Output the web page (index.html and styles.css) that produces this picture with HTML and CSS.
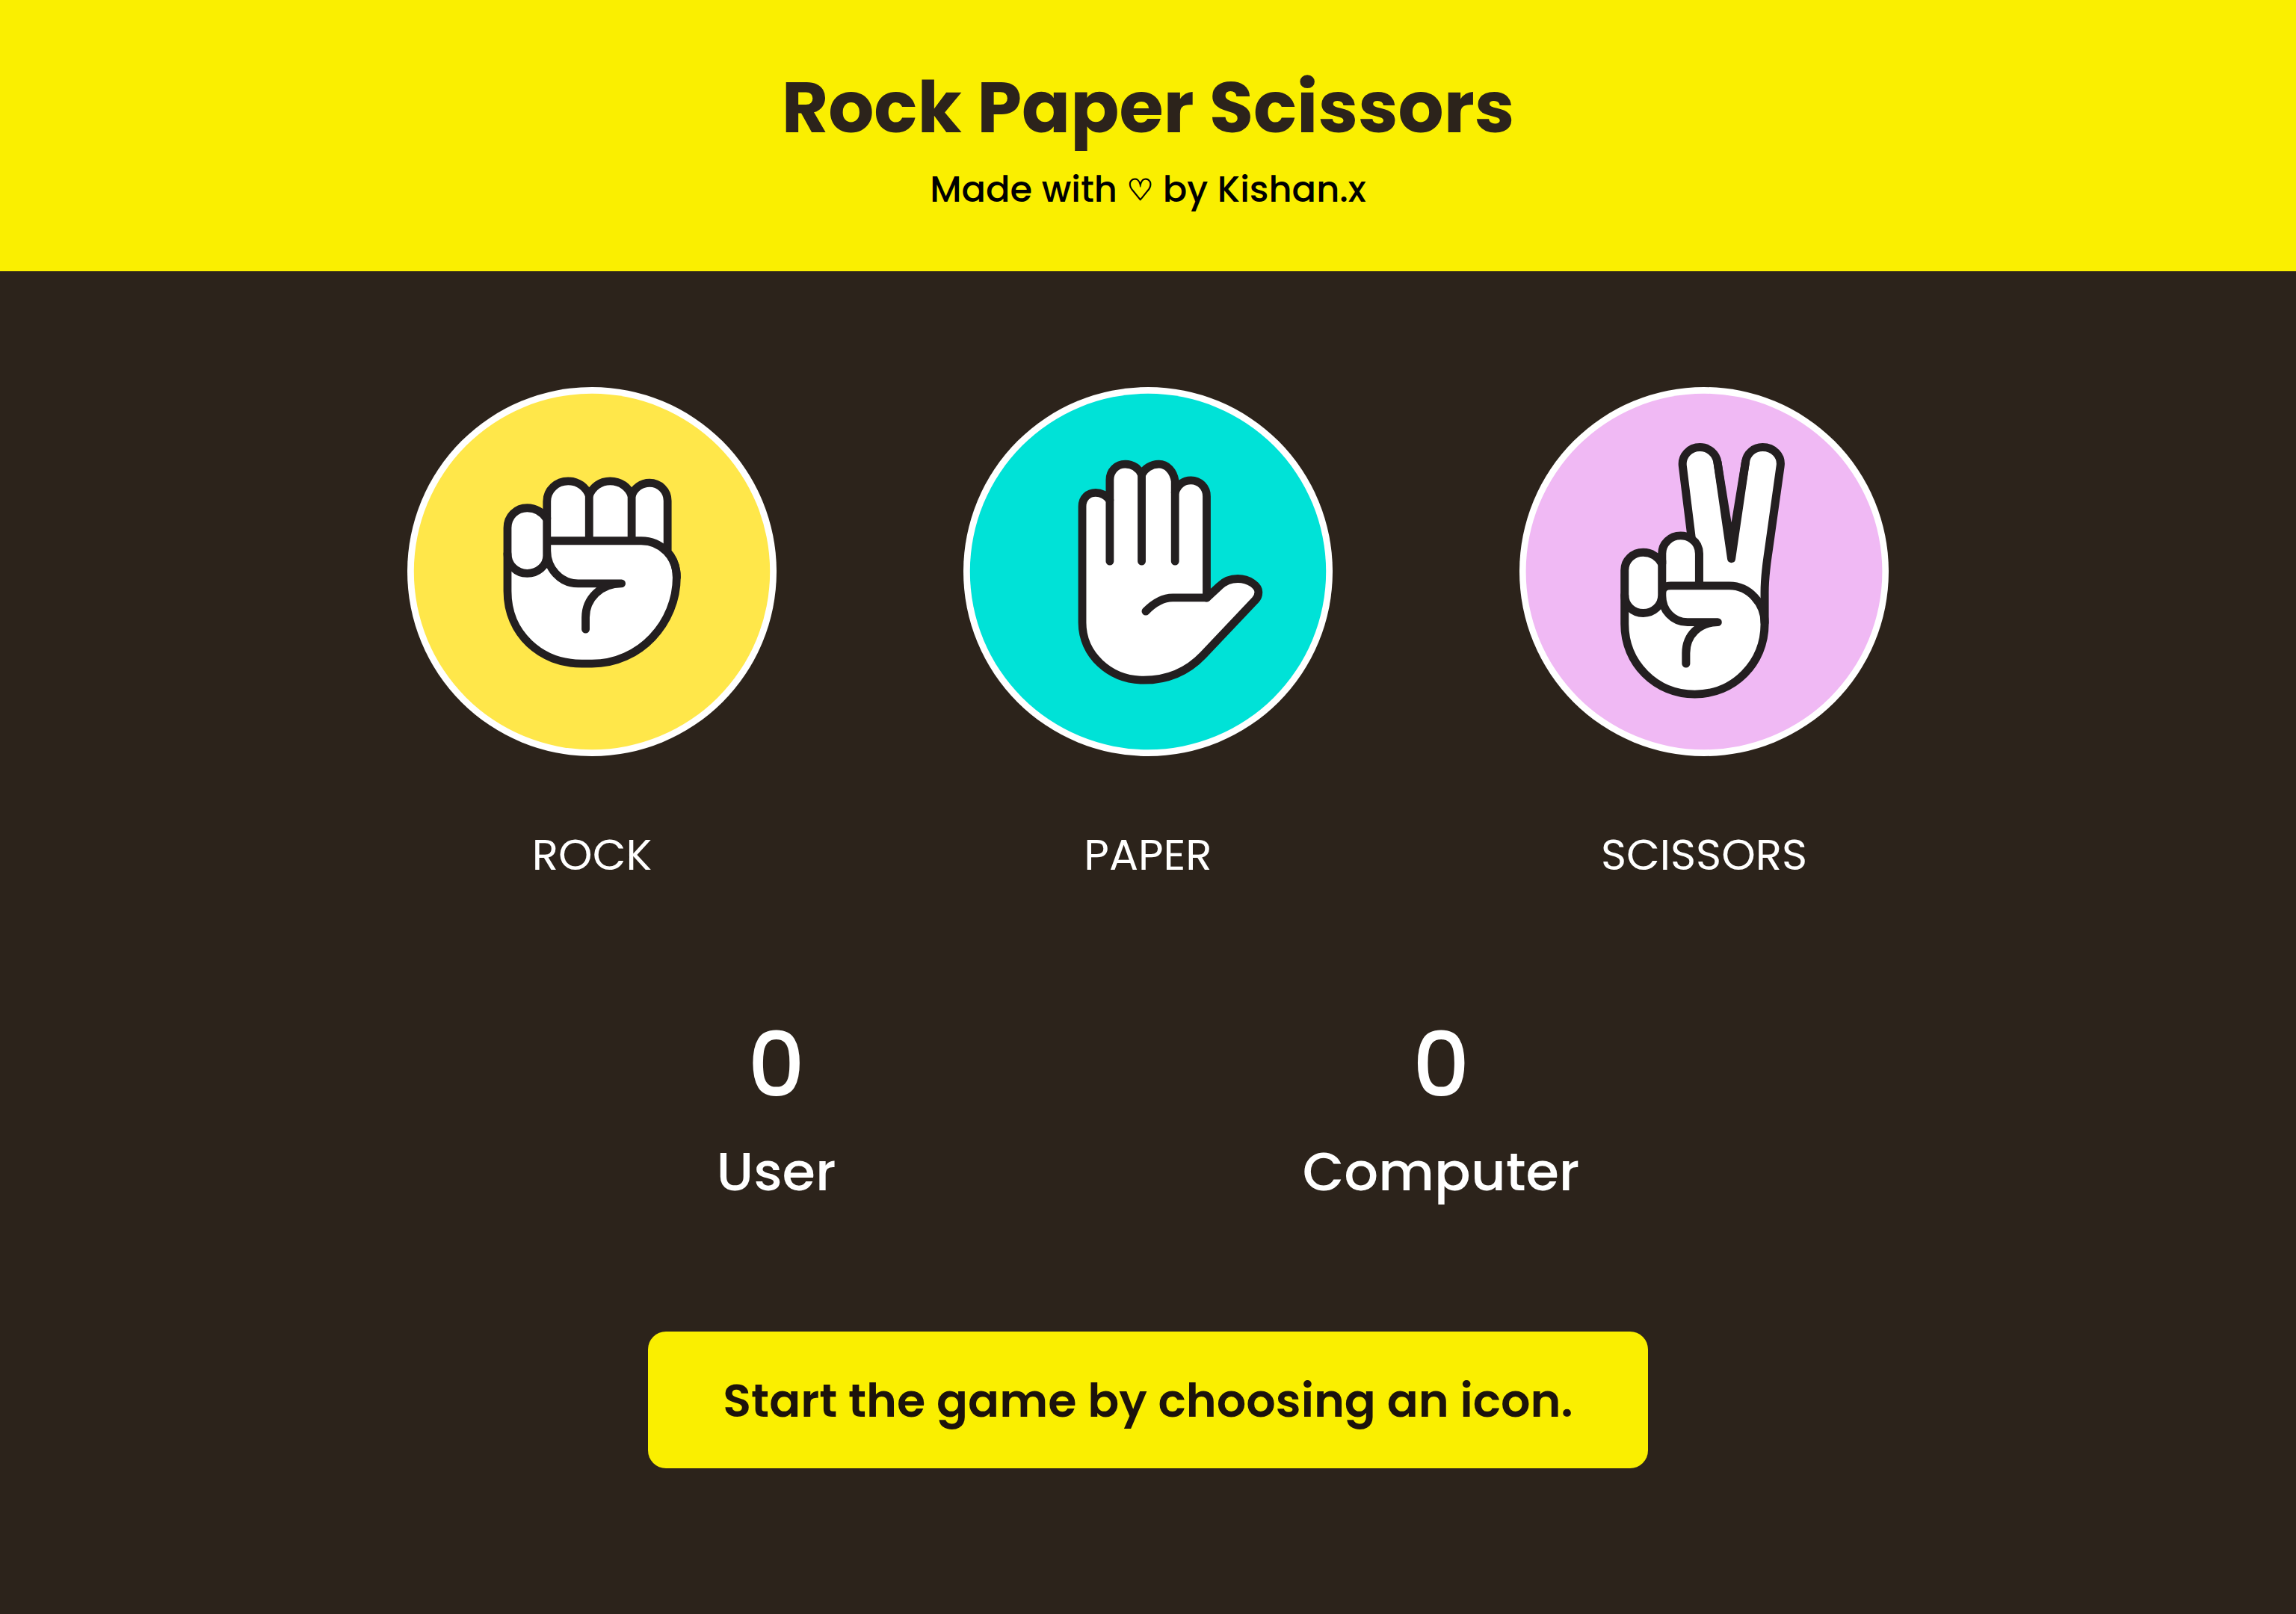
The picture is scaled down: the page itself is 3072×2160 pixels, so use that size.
FILE: index.html
```html
<!DOCTYPE html>
<html lang="en">
<head>
  <meta charset="utf-8">
  <meta name="viewport" content="width=device-width, initial-scale=1">
  <title>Rock Paper Scissors</title>
  <link rel="stylesheet" href="styles.css">
</head>
<body>
  <header class="header">
    <h1 class="title">Rock Paper Scissors</h1>
    <p class="subtitle">Made with <span class="heart">♡</span> by Kishan.x</p>
  </header>

  <main class="game">
    <div class="choices">
      <button class="choice" type="button">
        <svg class="hand" viewBox="45 53 1460 1460" aria-hidden="true">
          <circle class="ring" cx="775" cy="783" r="730"/>
          <circle class="rock-disc" cx="775" cy="783" r="704"/>
          <g class="lines">
            <path class="skin" d="M441 610C441 565 475 531 519 531C552 531 580 548 597 575V505C597 460 635 425 681 425C722 425 752 450 764 482C778 448 808 425 847 425C889 425 921 450 932 483C943 452 970 432 1003 432C1042 432 1074 463 1074 503V705C1097 730 1110 765 1110 805C1110 985 965 1147 775 1147H735C573 1147 441 1030 441 860Z"/>
            <path d="M597 575V700C597 770 650 830 720 830H892M597 661H970C1050 661 1110 725 1110 805M764 482V661M932 483V661M597 570V720C597 760 560 790 519 790C475 790 441 755 441 712M892 830C810 830 750 890 750 965V1011"/>
          </g>
        </svg>
        <span class="choice-label">ROCK</span>
      </button>
      <button class="choice" type="button">
        <svg class="hand" viewBox="57 53 1460 1460" aria-hidden="true">
          <circle class="ring" cx="787" cy="783" r="730"/>
          <circle class="paper-disc" cx="787" cy="783" r="704"/>
          <g class="lines">
            <path class="skin" d="M527 525C527 492 550 471 580 471C600 471 620 480 636 500V420C636 385 662 358 697 358C727 358 751 375 762 400C773 375 800 358 830 358C862 358 888 385 894 425V470C904 440 928 422 957 422C991 422 1019 449 1019 485V887L1070 840C1090 820 1115 811 1142 811C1188 811 1224 840 1224 864C1224 880 1220 887 1210 897L1005 1113C944 1177 862 1212 770 1212C634 1212 527 1110 527 985Z"/>
            <path d="M636 500V742M762 400V742M894 470V742M1019 886H885C845 886 812 905 778 940"/>
          </g>
        </svg>
        <span class="choice-label">PAPER</span>
      </button>
      <button class="choice" type="button">
        <svg class="hand" viewBox="68 53 1432 1460" preserveAspectRatio="none" aria-hidden="true">
          <ellipse class="ring" cx="784" cy="783" rx="716" ry="730"/>
          <ellipse class="scissors-disc" cx="784" cy="783" rx="691" ry="704"/>
          <g class="lines">
            <path class="skin" d="M476 778C476 738 508 707 548 707C580 707 606 725 621 752V712C621 672 653 641 693 641C709 641 724 646 736 654L701 366C696 325 727 291 768 291C803 291 831 317 836 350L890 690L945 348C950 315 977 291 1011 291C1054 291 1086 325 1080 366L1034 700C1025 765 1019 800 1019 865V990C1019 1145 900 1268 748 1268C596 1268 476 1145 476 990Z"/>
            <path d="M836 350L890 732L945 348M736 654C754 667 765 687 765 712V838M621 752V878C621 935 662 983 720 983H837M621 868C621 848 632 839 655 839H882C960 839 1019 910 1019 985M621 740V875C621 917 588 947 548 947C508 947 476 916 476 876M837 983C765 983 714 1035 714 1105V1147"/>
          </g>
        </svg>
        <span class="choice-label">SCISSORS</span>
      </button>
    </div>

    <section class="scores" aria-label="Score">
      <div class="score">
        <p class="score-value">0</p>
        <p class="score-name">User</p>
      </div>
      <div class="score">
        <p class="score-value">0</p>
        <p class="score-name">Computer</p>
      </div>
    </section>

    <p class="message" role="status">Start the game by choosing an icon.</p>
  </main>
</body>
</html>
```
FILE: styles.css
```css
* {
  box-sizing: border-box;
  margin: 0;
  padding: 0;
}

body {
  min-height: 100vh;
  background: #2c231b;
  color: #fff;
  font-family: "Poppins", sans-serif;
  text-align: center;
}

.header {
  padding: 72px 24px 71px;
  background: #faef00;
}

.title {
  color: #2c231b;
  font-size: 96px;
  font-weight: 700;
  line-height: 144px;
}

.subtitle {
  color: #000;
  font-size: 48px;
  font-weight: 500;
  line-height: 76px;
}

.heart {
  font-family: "DejaVu Sans", sans-serif;
  font-size: 40px;
  font-weight: 400;
  line-height: 1;
  vertical-align: 2px;
  -webkit-text-stroke: 1px currentColor;
}

.game {
  display: flex;
  flex-direction: column;
  align-items: center;
  padding: 155px 24px 120px;
}

.choices {
  display: flex;
  flex-wrap: wrap;
  justify-content: center;
  gap: 80px 250px;
}

.choice {
  display: flex;
  flex-direction: column;
  align-items: center;
  gap: 90px;
  border: 0;
  background: none;
  color: inherit;
  font: inherit;
  cursor: pointer;
}

.hand {
  display: block;
  width: 494px;
  height: 494px;
}

.ring {
  fill: #fff;
}

.rock-disc {
  fill: #ffe74a;
}

.paper-disc {
  fill: #00e2d7;
}

.scissors-disc {
  fill: #f0b9f4;
}

.lines {
  fill: none;
  stroke: #231f20;
  stroke-width: 32px;
  stroke-linecap: round;
  stroke-linejoin: round;
}

.skin {
  fill: #fff;
}

.choice-label {
  font-size: 58px;
  font-weight: 400;
  line-height: 84px;
}

.scores {
  display: flex;
  flex-wrap: wrap;
  justify-content: center;
  gap: 80px 624px;
  margin-top: 167px;
}

.score {
  display: flex;
  flex-direction: column;
  gap: 19px;
  font-weight: 500;
}

.score-value {
  font-size: 120px;
  line-height: 144px;
}

.score-name {
  font-size: 72px;
  line-height: 104px;
}

.message {
  margin-top: 162px;
  padding: 45px 100px 42px;
  border-radius: 24px;
  background: #faef00;
  color: #1c130b;
  font-size: 62px;
  font-weight: 600;
  line-height: 96px;
}
```
